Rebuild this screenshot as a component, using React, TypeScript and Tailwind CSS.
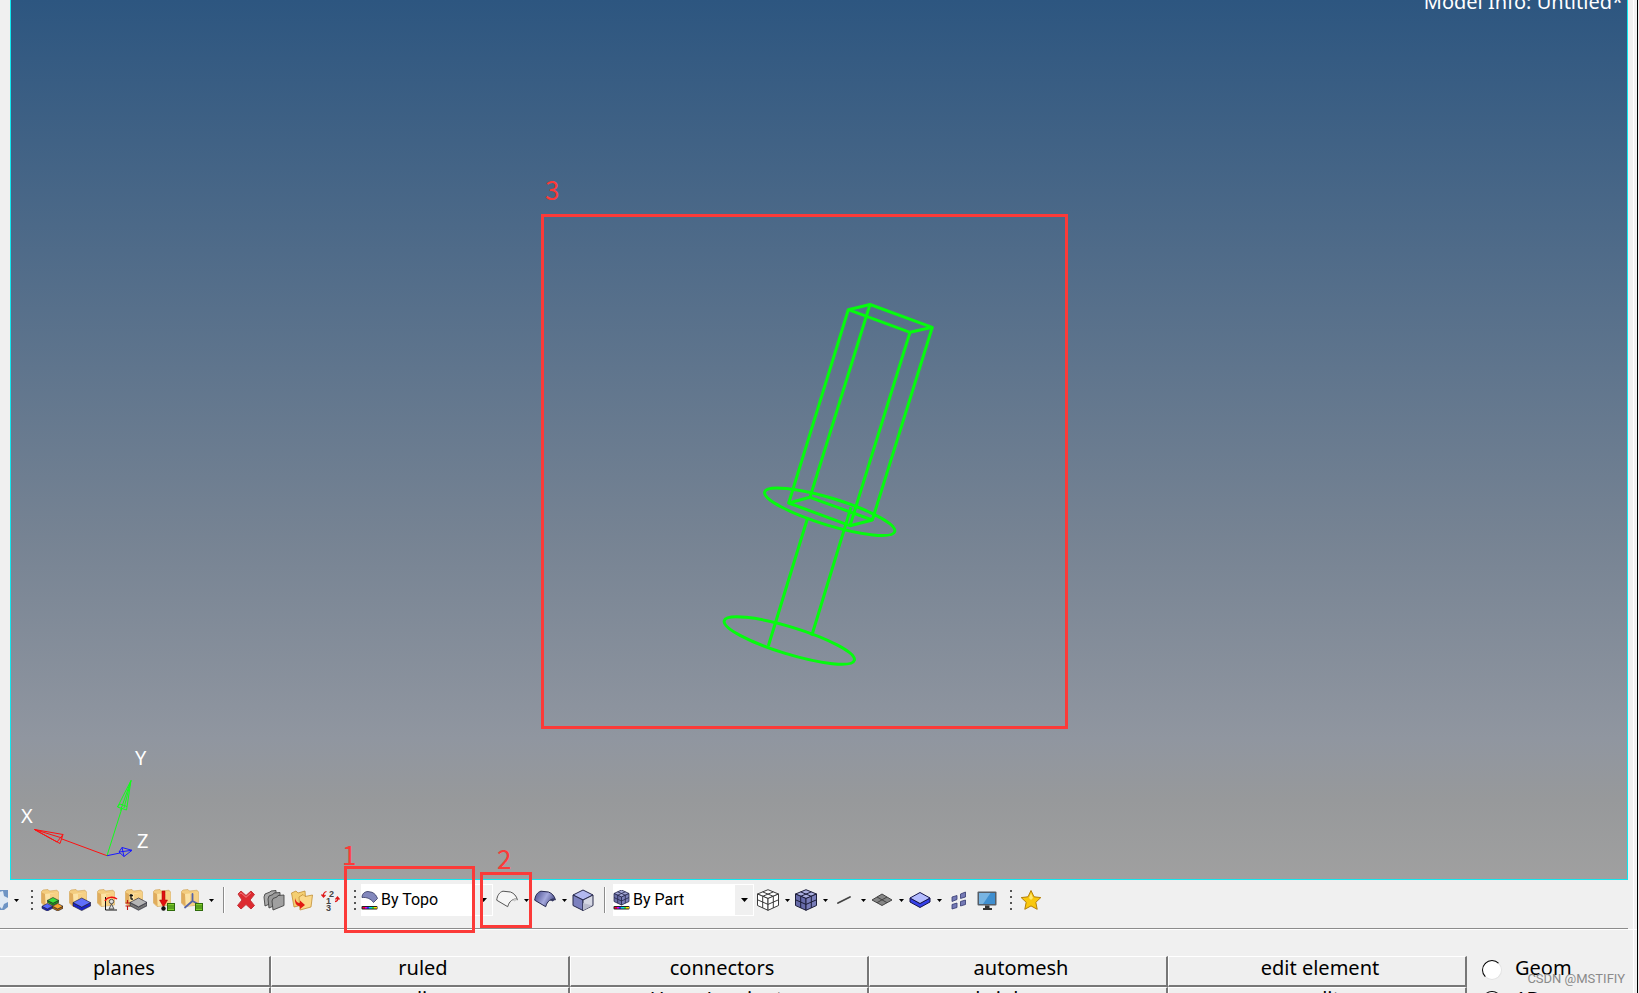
import type { ReactNode } from "react";

const PANELS = [
  ["planes", "ruled", "connectors", "automesh", "edit element"],
  ["cones", "spline", "HyperLaminate", "shrink wrap", "split"],
];

const PAGES = ["Geom", "1D"];

function Icon({ children }: { children: ReactNode }) {
  return (
    <svg width="22" height="22" viewBox="0 0 22 22" className="shrink-0" aria-hidden="true">
      {children}
    </svg>
  );
}

function Tool({ label, children }: { label: string; children: ReactNode }) {
  return (
    <button type="button" aria-label={label} className="flex h-8 w-7 shrink-0 items-center justify-center">
      <Icon>{children}</Icon>
    </button>
  );
}

function Caret({ label }: { label: string }) {
  return (
    <button type="button" aria-label={label} className="flex h-8 w-[10px] shrink-0 items-center justify-center">
      <svg width="5" height="3" viewBox="0 0 5 3" aria-hidden="true">
        <path d="M0 0h5L2.5 3z" fill="#000" />
      </svg>
    </button>
  );
}

function Grip() {
  return (
    <div className="flex w-[17px] shrink-0 flex-col items-center gap-1 pl-1">
      <span className="size-[2px] bg-[#555]" />
      <span className="size-[2px] bg-[#555]" />
      <span className="size-[2px] bg-[#555]" />
      <span className="size-[2px] bg-[#555]" />
    </div>
  );
}

function Separator() {
  return (
    <div className="flex w-4 shrink-0 justify-center">
      <span className="h-[26px] w-px bg-[#8c8c8c]" />
      <span className="h-[26px] w-px bg-white" />
    </div>
  );
}

function Combo({ label, value, width, children }: { label: string; value: string; width: string; children: ReactNode }) {
  return (
    <div className={`relative h-8 shrink-0 ${width}`}>
      <select
        aria-label={label}
        className="size-full appearance-none rounded-none bg-white pr-5 pl-5 font-[Roboto,sans-serif] text-base text-black"
      >
        <option>{value}</option>
      </select>
      <svg width="18" height="20" viewBox="0 0 18 20" className="pointer-events-none absolute top-[6px] left-0" aria-hidden="true">
        {children}
      </svg>
      <span className="pointer-events-none absolute inset-y-px right-px flex w-[18px] items-center justify-center bg-[#f0f0f0]">
        <svg width="7" height="4" viewBox="0 0 7 4" aria-hidden="true">
          <path d="M0 0h7L3.5 4z" fill="#000" />
        </svg>
      </span>
    </div>
  );
}

function Folder() {
  return (
    <>
      <path d="M.5 2.500 2 1 7 .5 8.500 2 16 1.200 17.500 3V16L4 17.500.5 14z" fill="#f3cd80" stroke="#cf9f52" strokeWidth=".6" />
      <path d="M4 5 17.200 3.500V15.500L4.500 17z" fill="#fce3a6" />
      <path d="M9 5 17.200 3.500V15.500L9 16.500z" fill="#f6d084" />
      <path d="M.8 3.500 4 5 4.500 17 .8 14z" fill="#e0ac5c" />
    </>
  );
}

function Block({ x, y, w, top, side }: { x: number; y: number; w: number; top: string; side: string }) {
  const h = w * 0.26;
  const d = w * 0.2;
  return (
    <g stroke="#1a1a2a" strokeWidth=".6" strokeLinejoin="round">
      <path d={`M${x} ${y + h}v${d}l${w / 2} ${h}l${w / 2} ${-h}v${-d}l${-w / 2} ${h}z`} fill={side} />
      <path d={`M${x} ${y + h}l${w / 2} ${-h}l${w / 2} ${h}l${-w / 2} ${h}z`} fill={top} />
    </g>
  );
}

function GreenNote() {
  return (
    <>
      <rect x="14.500" y="14.500" width="7" height="7" fill="#7fd02c" stroke="#2f6b0c" />
      <path d="M15 17h6M15 19h6" stroke="#2f6b0c" strokeWidth=".9" />
    </>
  );
}

function Surface({ filled }: { filled?: boolean }) {
  return (
    <>
      {filled && (
        <defs>
          <linearGradient id="surf" x1="0" y1="0" x2="1" y2=".4">
            <stop offset="0" stopColor="#5b5f9c" />
            <stop offset=".25" stopColor="#6a6eab" />
            <stop offset=".6" stopColor="#a6aade" />
            <stop offset="1" stopColor="#4d518c" />
          </linearGradient>
        </defs>
      )}
      <path
        d="M.7 11.200C1.200 6.500 3.500 3 7 2.200L14.500 3C18 4.300 20.500 7 21.400 10.800C20 9.500 17.500 10 15.500 11.500C13.500 13 12.500 15 11.700 17.700z"
        fill={filled ? "url(#surf)" : "#f6f6f6"}
        stroke={filled ? "#24264d" : "#555"}
        strokeWidth="1"
        strokeLinejoin="round"
      />
      <path d="M15.500 11.500C17.500 10 20 9.500 21.400 10.800L18.500 12.500C17.500 11.500 16.500 11.300 15.500 11.500z" fill={filled ? "#34375f" : "#ccc"} />
    </>
  );
}

function GridCube({ dark }: { dark?: boolean }) {
  return (
    <g stroke={dark ? "#1c1d38" : "#3a3a3a"} strokeWidth="1" strokeLinejoin="round">
      <path d="M11 .7 21.500 5 11 9.500.5 5z" fill={dark ? "#a9adde" : "#fff"} />
      <path d="M.5 5 11 9.500V21.300L.5 16.500z" fill={dark ? "#666aa8" : "#fff"} />
      <path d="M21.500 5 11 9.500V21.300L21.500 16.500z" fill={dark ? "#787cb8" : "#fff"} />
      <path d="M5.700 2.900 16.300 7.300V19M16.300 2.900 5.700 7.300V19M.5 10.800 11 15.400 21.500 10.800" fill="none" />
    </g>
  );
}

function Rainbow() {
  return (
    <>
      <rect x=".5" y="16" width="16" height="3.500" rx="1" fill="#222" />
      <rect x="1.500" y="17" width="3" height="1.500" fill="#f03" />
      <rect x="4" y="17" width="2" height="1.500" fill="#d0f" />
      <rect x="6" y="17" width="2" height="1.500" fill="#33f" />
      <rect x="8" y="17" width="3" height="1.500" fill="#0de" />
      <rect x="11" y="17" width="2" height="1.500" fill="#3e3" />
      <rect x="13" y="17" width="3" height="1.500" fill="#fd0" />
    </>
  );
}

function Toolbar() {
  return (
    <div className="relative mr-[11px] flex h-[49px] shrink-0 items-center border-b border-[#8c8c8c] pb-2">
      <div className="-ml-[17px] flex shrink-0">
        <Tool label="Settings">
          <path d="M2 1H22V18L18 21H5z" fill="#6e94c4" />
          <path d="M13 3 17 2 18 7 22 9V13L18 15 16 20 13 17z" fill="#dfe9f4" />
        </Tool>
        <Caret label="More settings" />
      </div>
      <Grip />
      <Tool label="Assemblies">
        <Folder />
        <Block x={6.5} y={8.5} w={11} top="#3be03b" side="#17a017" />
        <Block x={1} y={14.500} w={10.500} top="#5668ff" side="#1a22c0" />
        <Block x={11.500} y={14.500} w={10.500} top="#f7a52c" side="#b86a0a" />
      </Tool>
      <Tool label="Components">
        <Folder />
        <Block x={4} y={9} w={17.500} top="#5f6ffa" side="#1a22c8" />
      </Tool>
      <Tool label="Properties">
        <Folder />
        <path d="M8.500 8V21H20" fill="none" stroke="#111" />
        <path d="M8 12C10 8 16 7 20 10" fill="none" stroke="#f01010" strokeWidth="1.500" />
        <circle cx="14.500" cy="12.500" r="2.200" fill="#ddd" stroke="#444" strokeWidth=".9" />
        <path d="M14.500 15 12 20H17z" fill="#ddd" stroke="#444" strokeWidth=".9" />
      </Tool>
      <Tool label="Thickness">
        <Folder />
        <path d="M6 5V9.500Q6 10.500 8 10M4.500 6.500H8" fill="none" stroke="#111" strokeWidth="1.300" />
        <path d="M2.500 11V14M.5 14H5M2.500 21V17M.5 17H5" fill="none" stroke="#c01010" strokeWidth="1.100" />
        <Block x={5} y={9} w={17} top="#b5b5b5" side="#757575" />
      </Tool>
      <Tool label="Load collectors">
        <Folder />
        <path d="M9 2H12V11H14.500L10.500 18 6.500 11H9z" fill="#e01010" stroke="#a00" strokeWidth=".5" />
        <circle cx="10.500" cy="19.500" r="2.200" fill="#111" />
        <GreenNote />
      </Tool>
      <Tool label="Systems">
        <Folder />
        <path d="M11.500 5V12L4 18.500M11.500 12 18 15.500" fill="none" stroke="#5663a8" strokeWidth="1.800" strokeLinecap="round" />
        <GreenNote />
      </Tool>
      <Caret label="More collectors" />
      <Separator />
      <Tool label="Delete">
        <path
          d="M3 5 6 2 11 6.500 16 2 19.500 5.500 15 11 19.500 16.500 16 20 11 15.500 6 20 2.500 16.500 7 11z"
          fill="#dd2a30"
          stroke="#c3343a"
          strokeLinejoin="round"
        />
        <path d="M4.500 5 6 3.800 11 8.300 16 3.800" fill="none" stroke="#f58084" />
      </Tool>
      <Tool label="Card edit">
        <g stroke="#444" strokeWidth=".9" strokeLinejoin="round">
          <path d="M1 8 2 5 7 3 8 2 13 1.500V12L2 17z" fill="#aaa" />
          <path d="M5 10 6 7 10 5.500 11 4 17 3.500V14L6 19z" fill="#999" />
          <path d="M9 12 10 9.500 14 8 15 6.500 21 6V16.500L10 21z" fill="#a0a0a0" />
        </g>
      </Tool>
      <Tool label="Organize">
        <path d="M.5 4 5 2 7 4 14 2 15 15 3 18z" fill="#f4cf72" stroke="#c18f35" strokeWidth=".8" />
        <path d="M8 8 12 5.500 14 7.500 21.500 6 20 18 9 21z" fill="#fbd98a" stroke="#c18f35" strokeWidth=".8" />
        <path d="M4 9Q5 14 9 14V11.500L14 16 9 20V17.500Q3 16 4 9z" fill="#e21a12" />
      </Tool>
      <Tool label="Renumber">
        <g fontSize="9" fontWeight="bold" fill="#444" fontFamily="Liberation Sans, sans-serif">
          <text x="10" y="8">2</text>
          <text x="7" y="15">1</text>
          <text x="7" y="22">3</text>
        </g>
        <path
          d="M7.500 2.500Q4 3.500 4.500 7M2.500 5.500 4.500 8 6.500 6M16 12.500Q19.500 12 18.500 9M16.500 10.500 18.500 8 20.500 10.500"
          fill="none"
          stroke="#e01818"
          strokeWidth="1.300"
        />
      </Tool>
      <Grip />
      <Combo label="Geometry color mode" value="By Topo" width="w-[132px]">
        <path d="M1 7.500C1 3.500 4 1.500 7 1.500L11 2.300C14 3.500 15.500 6 16.500 8.500L12.500 12.500C10 9 6 7 1 7.500z" fill="#8388bd" stroke="#34375f" strokeWidth=".8" />
        <Rainbow />
      </Combo>
      <Tool label="Wireframe geometry">
        <Surface />
      </Tool>
      <Caret label="Wireframe options" />
      <Tool label="Shaded geometry">
        <Surface filled />
      </Tool>
      <Caret label="Shaded options" />
      <Tool label="Transparent geometry">
        <g stroke="#26284a" strokeWidth="1" strokeLinejoin="round">
          <path d="M11 1 21 6 11 11 1 6z" fill="#b3b9ef" />
          <path d="M1 6 11 11V21.500L1 16.500z" fill="#7c81bf" />
          <path d="M21 6 11 11V21.500L21 16.500z" fill="#d6d8e4" />
          <path d="M11 21.500V14L20.500 16.500z" fill="#b9bbcd" stroke="none" />
        </g>
      </Tool>
      <Separator />
      <Combo label="Mesh color mode" value="By Part" width="w-[141px]">
        <g stroke="#24264a" strokeWidth=".8" strokeLinejoin="round">
          <path d="M8.500 0 16 3.500 8.500 7 1 3.500z" fill="#a0a4d4" />
          <path d="M1 3.500 8.500 7V15L1 11.500z" fill="#6b6fa8" />
          <path d="M16 3.500 8.500 7V15L16 11.500z" fill="#7d81b8" />
          <path d="M1 7.500 8.500 11 16 7.500M4.700 5.200V13.200M12.300 5.200V13.200M4.700 1.800 12.300 5.200M12.300 1.800 4.700 5.200" fill="none" />
        </g>
        <Rainbow />
      </Combo>
      <Tool label="Wireframe elements">
        <GridCube />
      </Tool>
      <Caret label="Wireframe element options" />
      <Tool label="Shaded elements">
        <GridCube dark />
      </Tool>
      <Caret label="Shaded element options" />
      <Tool label="1D elements">
        <path d="M5 14 17 8" stroke="#444" strokeWidth="1.800" strokeLinecap="round" />
      </Tool>
      <Caret label="1D options" />
      <Tool label="2D elements">
        <path d="M11 5 21 11 11 16.500 1 11z" fill="#858585" stroke="#444" strokeLinejoin="round" />
        <path d="M6 8 16 13.700M16 8 6 13.700" stroke="#444" />
      </Tool>
      <Caret label="2D options" />
      <Tool label="3D elements">
        <g stroke="#14144d" strokeLinejoin="round">
          <path d="M1 9V13L11 18.500 21 13V9L11 14.500z" fill="#3540e8" />
          <path d="M11 3.500 21 9 11 14.500 1 9z" fill="#b4bcff" />
        </g>
      </Tool>
      <Caret label="3D options" />
      <Tool label="Shrink elements">
        <g fill="#7479b5" stroke="#34386e" strokeWidth=".8">
          <path d="M5 8 10 6.500V10.500L5 12.500z" />
          <path d="M13.500 5 18.500 3V8L13.500 9.500z" />
          <path d="M5 15.500 10 14V18.500L5 20z" />
          <path d="M13.500 12.500 18.500 11V15.500L13.500 17z" />
        </g>
      </Tool>
      <Tool label="Visualization options">
        <rect x="2.500" y="2.500" width="19" height="14" rx="1" fill="#555d66" />
        <rect x="4" y="4" width="16" height="11" fill="#3f8fd0" />
        <path d="M4 4H15.500L8 15H4z" fill="#78b4e2" />
        <path d="M10 16.500H14.500V19H17V21H8V19H10z" fill="#333" />
      </Tool>
      <Grip />
      <Tool label="Favorites">
        <path
          d="M11 1.500 14 7.800 20.800 8.600 15.800 13.300 17.200 20.300 11 16.900 4.800 20.300 6.200 13.300 1.200 8.600 8 7.800z"
          fill="#f9c80e"
          stroke="#b5800a"
          strokeLinejoin="round"
        />
        <path d="M11 4 13 9 11 11 9 9z" fill="#ffe873" />
      </Tool>

      <Mark text="1" box="left-[344px] -top-[14px] h-[67px] w-[131px]" pos="-left-[5px] -top-[31px]" />
      <Mark text="2" box="left-[480px] -top-2 h-[56px] w-[52px]" pos="left-[14px] -top-[33px]" />
    </div>
  );
}

function Mark({ text, box, pos }: { text: string; box: string; pos: string }) {
  return (
    <div className={`pointer-events-none absolute border-[3px] border-[#fc3a38] ${box}`}>
      <span className={`absolute font-['Noto_Sans_CJK_SC',sans-serif] text-[26px] leading-8 text-[#fc3a38] ${pos}`}>{text}</span>
    </div>
  );
}

function Model() {
  return (
    <svg width="260" height="380" viewBox="700 290 260 380" className="absolute top-[290px] left-[689px]" aria-hidden="true">
      <g fill="none" stroke="#06fb0e" strokeWidth="3" strokeLinejoin="round">
        <path d="M848.300 309.700 870 304.500 932.300 327.300 910 332.300z" />
        <path d="M788.700 503 810 497.300 872.300 520 850 525.700z" />
        <path d="M848.300 309.700 788.700 503M870 304.500 810 497.300M932.300 327.300 872.300 520M910 332.300 850 525.700" />
        <path d="M851 507.300 811.700 635.700M807.700 517.700 768.300 646" />
        <ellipse cx="829.700" cy="511.700" rx="68" ry="13.500" transform="rotate(17 829.700 511.700)" />
        <ellipse cx="789.300" cy="640.500" rx="68" ry="13.500" transform="rotate(17 789.300 640.500)" />
      </g>
    </svg>
  );
}

function Axes() {
  return (
    <svg width="150" height="130" viewBox="11 749 150 130" className="absolute bottom-0 left-0" aria-label="Axes">
      <g fill="none" strokeWidth="1">
        <path d="M107 855.700 62 839M34.500 829.500 63 834.500 60 843.500zM34.500 829.500 62 838M34.500 829.500 57 842 63 834.500" stroke="#ff1010" />
        <path d="M107 855.700 122 808M131 780.500 117.500 807 126.500 810zM131 780.500 120.500 810.500M131 780.500 124 808M117.500 807 120 804 127 806.500" stroke="#10ff18" />
        <path d="M107 855.700 120 853M132 850.300 122 847.500 119 852 124 856.500zM132 850.300 119 852M122 847.500 124 856.500" stroke="#1a1aff" />
      </g>
      <g fill="#fff" fontFamily="Noto Sans, sans-serif" fontSize="20">
        <text x="21" y="823">X</text>
        <text x="135" y="765">Y</text>
        <text x="137" y="848">Z</text>
      </g>
    </svg>
  );
}

function Viewport() {
  return (
    <main className="relative mr-[11px] ml-[10px] min-h-0 flex-1 border-x border-b border-[#10e8f0] bg-[linear-gradient(to_bottom,#2d5680_0%,#768393_61%,#9096a0_84%,#97999b_91%,#a0a0a0_100%)]">
      <p className="absolute -top-3 right-1 text-xl leading-7 text-white">Model Info: Untitled*</p>
      <Model />
      <Axes />
      <Mark text="3" box="left-[530px] top-[214px] h-[515px] w-[527px]" pos="left-px -top-[44px]" />
    </main>
  );
}

function PanelMenu() {
  return (
    <div className="flex h-[64px] shrink-0 overflow-hidden border-t border-white pt-[26px]">
      <div className="-ml-[28px] grid flex-1 auto-rows-[31px] grid-cols-5">
        {PANELS.flat().map((name) => (
          <button
            key={name}
            type="button"
            className="border-t border-r-2 border-b-2 border-l border-t-white border-r-[#777] border-b-[#777] border-l-white bg-[#efefef] pb-[6px] pl-[6px] text-xl leading-5"
          >
            {name}
          </button>
        ))}
      </div>
      <div className="w-[172px] pl-[15px]">
        {PAGES.map((page) => (
          <label key={page} className="flex h-[31px] items-center gap-[13px] pb-1 text-xl leading-5">
            <input
              type="radio"
              name="page"
              className="size-5 appearance-none rounded-full border border-t-black border-r-[#e3e3e3] border-b-[#e3e3e3] border-l-black bg-white"
            />
            <span className="pb-1">{page}</span>
          </label>
        ))}
      </div>
    </div>
  );
}

export default function App() {
  return (
    <div className="relative flex h-screen flex-col overflow-hidden bg-[#f0f0f0] font-['Noto_Sans',sans-serif] text-black">
      <Viewport />
      <Toolbar />
      <PanelMenu />
      <div className="absolute inset-y-0 right-0 w-[6px] border-r border-l border-r-[#eee] border-l-white">
        <div className="ml-auto h-full w-px bg-black" />
      </div>
      <p className="absolute right-[14px] bottom-[6px] font-[Roboto,sans-serif] text-[13px] leading-4 text-[#8a8a8a]">CSDN @MSTIFIY</p>
    </div>
  );
}
